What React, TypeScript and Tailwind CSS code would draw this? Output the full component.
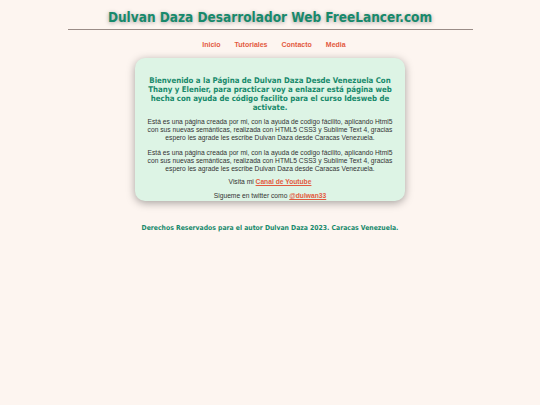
export default function App() {
  const heavy = { fontFamily: '"DejaVu Sans Condensed", "DejaVu Sans", Verdana, sans-serif', fontStretch: 'condensed' as const };
  return (
    <div className="min-h-[405px] w-full bg-[#fdf5f0] pt-[8px] font-['Liberation_Sans',Arial,sans-serif]">
      <h1
        className="text-center text-[13.5px] font-bold leading-[18px] text-[#17896b] [text-shadow:0_1px_4px_rgba(0,0,0,0.35)]"
        style={heavy}
      >
        Dulvan Daza Desarrolador Web FreeLancer.com
      </h1>
      <div className="mx-auto mt-[3px] h-px w-[405px] bg-[#9a8c87]" />
      <nav className="mt-[10px] flex justify-center gap-[14px] pl-[8px] text-[7px] font-bold leading-[9px] text-[#e35a3f]">
        <a>Inicio</a>
        <a>Tutoriales</a>
        <a>Contacto</a>
        <a>Media</a>
      </nav>
      <main className="mx-auto mt-[9px] w-[270px] rounded-[10px] bg-[#ddf4e5] px-[10px] pt-[18px] pb-[1px] text-center shadow-[0_2px_8px_rgba(0,0,0,0.35)]">
        <h2
          className="text-[7.8px] font-bold leading-[9px] text-[#17896b]"
          style={heavy}
        >
          Bienvenido a la Página de Dulvan Daza Desde Venezuela Con Thany y Elenier, para practicar voy a enlazar está página web hecha con ayuda de código facilito para el curso Idesweb de activate.
        </h2>
        <p className="mt-[6px] text-[6.7px] leading-[8px] text-[#333]">
          Está es una página creada por mi, con la ayuda de codigo fácilito, aplicando Html5 con sus nuevas semánticas, realizada con HTML5 CSS3 y Sublime Text 4, gracias espero les agrade les escribe Dulvan Daza desde Caracas Venezuela.
        </p>
        <p className="mt-[7px] text-[6.7px] leading-[8px] text-[#333]">
          Está es una página creada por mi, con la ayuda de codigo fácilito, aplicando Html5 con sus nuevas semánticas, realizada con HTML5 CSS3 y Sublime Text 4, gracias espero les agrade les escribe Dulvan Daza desde Caracas Venezuela.
        </p>
        <p className="mt-[5px] text-[6.7px] leading-[8px] text-[#333]">
          Visita mi <a className="font-bold text-[#e35a3f] underline">Canal de Youtube</a>
        </p>
        <p className="mt-[6px] text-[6.7px] leading-[8px] text-[#333]">
          Sigueme en twitter como <a className="font-bold text-[#e35a3f] underline">@dulwan33</a>
        </p>
      </main>
      <footer
        className="mt-[23px] text-center text-[6.8px] font-bold leading-[9px] text-[#17896b]"
        style={heavy}
      >
        Derechos Reservados para el autor Dulvan Daza 2023. Caracas Venezuela.
      </footer>
    </div>
  );
}
